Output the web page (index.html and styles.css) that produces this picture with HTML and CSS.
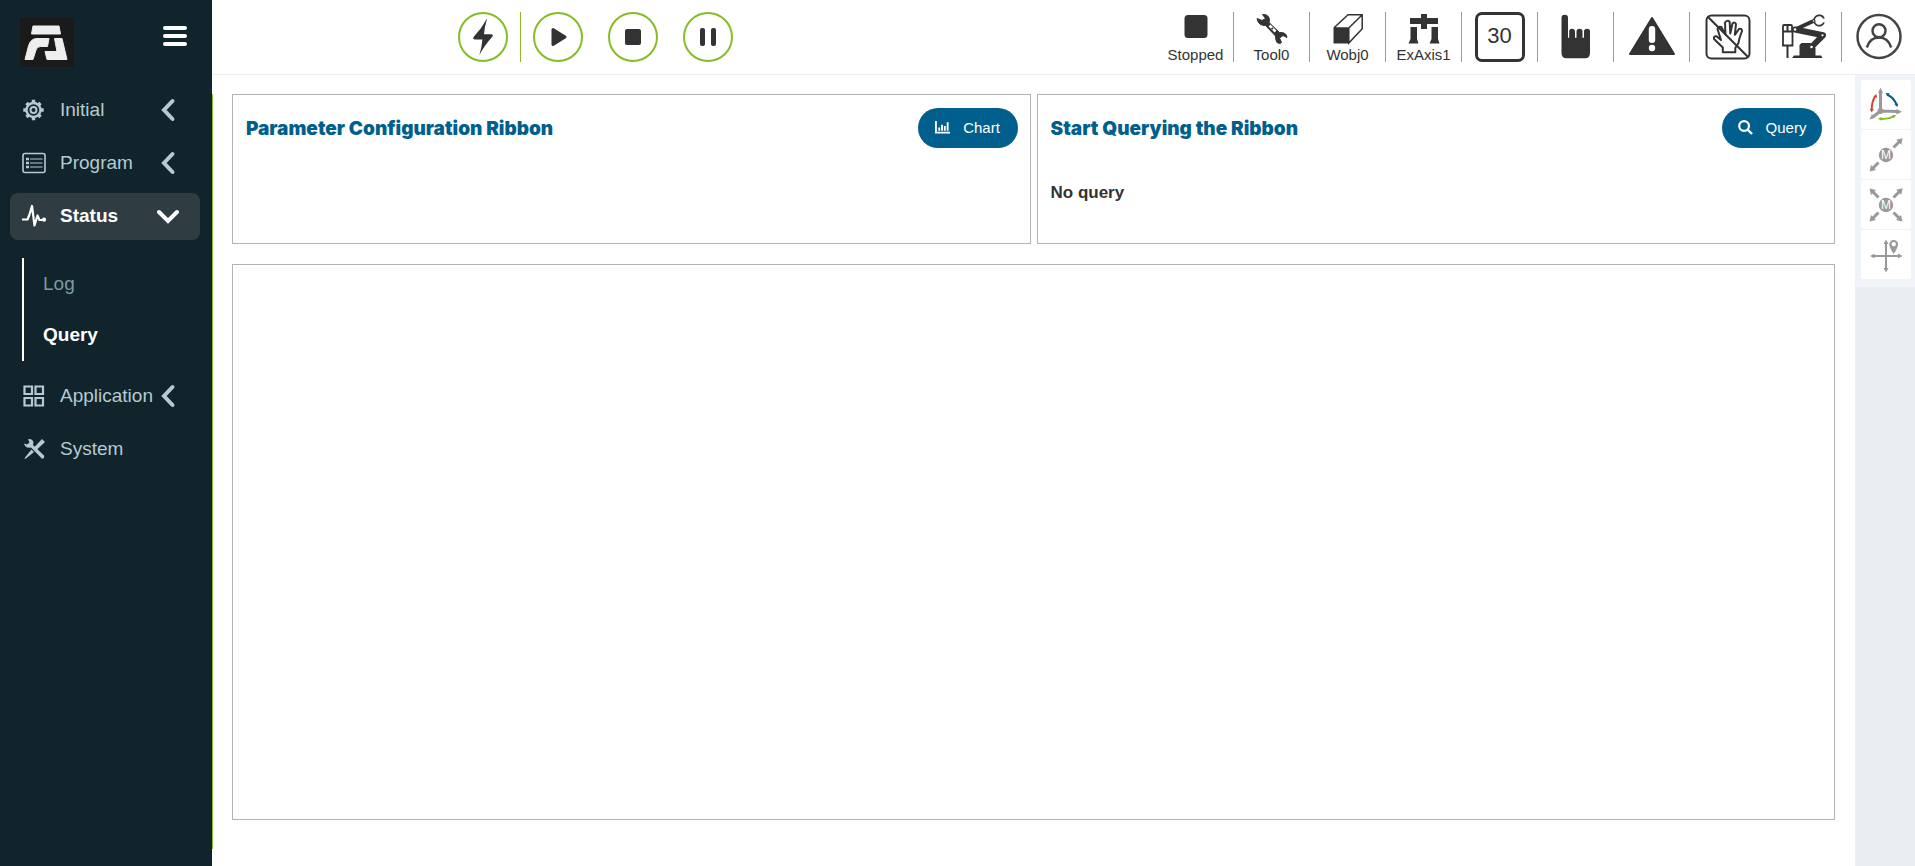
FILE: index.html
```html
<!DOCTYPE html>
<html lang="en">
<head>
<meta charset="utf-8">
<title>Status Query</title>
<link rel="stylesheet" href="styles.css">
</head>
<body>
<aside class="sidebar">
  <div class="brand">
    <svg class="logo" viewBox="0 0 54 49" role="img" aria-label="Logo">
      <rect width="54" height="49" fill="#1a1a1a"/>
      <g fill="#eee" stroke="#eee" stroke-width="1" stroke-linejoin="round">
        <path d="M13 8h26l1.500 8H11.500z"/>
        <path d="M5 41.500 8.500 28Q10.500 20.500 17 20.500H29l-1.500 8H20.500Q17 28.500 16 32l-3 9.500z"/>
        <path d="M34.500 20.500h7.500l5 21H27l-2-8h12z"/>
      </g>
    </svg>
    <button class="menu-toggle" aria-label="Toggle menu"><span></span><span></span><span></span></button>
  </div>
  <nav class="menu">
    <a class="item" href="#initial">
      <svg class="item-icon" viewBox="0 0 24 24" fill="none" stroke="currentColor">
        <circle cx="11.500" cy="12" r="7" stroke-width="2.400"/><circle cx="11.500" cy="12" r="3" stroke-width="2"/>
        <path d="M11.500 1.800v3M11.500 19.200v3M1.300 12h3M18.700 12h3M4.500 5l2 2M16.500 17l2 2M4.500 19l2-2M16.500 7l2-2" stroke-width="3.400"/>
      </svg>
      <span>Initial</span>
      <svg class="chevron" viewBox="0 0 24 24"><path d="M16.500 3 8 12l8.500 9"/></svg>
    </a>
    <a class="item" href="#program">
      <svg class="item-icon" viewBox="0 0 24 24" fill="none" stroke="currentColor">
        <rect x="1" y="2.500" width="22" height="19" rx="2" stroke-width="1.600"/>
        <path d="M8 8h12.500M8 12h12.500M8 16h12.500" stroke-width="1"/>
        <path d="M4 8h3M4 12h3M4 16h3" stroke-width="2.400"/>
      </svg>
      <span>Program</span>
      <svg class="chevron" viewBox="0 0 24 24"><path d="M16.500 3 8 12l8.500 9"/></svg>
    </a>
    <a class="item active" href="#status">
      <svg class="item-icon" viewBox="0 0 24 24" fill="none" stroke="currentColor" stroke-width="2.200" stroke-linejoin="round">
        <path d="M0 15.500h5.500l2-5L10 2l2.500 19.500 3-10 2 4.500H22"/><circle cx="22" cy="15.700" r="1" fill="currentColor"/>
      </svg>
      <span>Status</span>
      <svg class="chevron" viewBox="0 0 24 24"><path d="M3 8l9 9 9-9"/></svg>
    </a>
    <div class="submenu">
      <a href="#log">Log</a>
      <a class="current" href="#query">Query</a>
    </div>
    <a class="item" href="#application">
      <svg class="item-icon" viewBox="0 0 24 24" fill="none" stroke="currentColor" stroke-width="2.200">
        <path d="M2.500 2.500h7.500v7.500H2.500zM13.500 2.500h7.500v7.500H13.500zM2.500 14h7.500v7.500H2.500zM13.500 14h7.500v7.500H13.500z"/>
      </svg>
      <span>Application</span>
      <svg class="chevron" viewBox="0 0 24 24"><path d="M16.500 3 8 12l8.500 9"/></svg>
    </a>
    <a class="item" href="#system">
      <svg class="item-icon" viewBox="0 0 24 24" fill="currentColor">
        <path d="M2 6.500 5 7.500 7.500 5.500 6 2.200Q10 1.500 11.500 5L11 8 22 18.500Q23 21.500 20 21.800L9 10.500Q3 11.500 2 6.500z"/>
        <path d="M20 2l3 3-8.500 8L12 10.500zM9.500 12.500l2.500 2.500-8 6.500-1.500.5.500-1.500z"/>
      </svg>
      <span>System</span>
    </a>
  </nav>
</aside>
<div class="page">
  <header class="topbar">
    <div class="controls">
      <button class="round" aria-label="Enable"><svg viewBox="0 0 50 50"><path d="M29.200 6.300Q26.500 15 26 22.300H33Q35.500 22.500 34.500 24.500 26 34 21.300 43.200 24 34 24.300 27.500H17Q14.500 27 15.600 25 24 16 29.200 6.300z"/></svg></button>
      <span class="divider"></span>
      <div class="playback">
        <button class="round" aria-label="Start"><svg viewBox="0 0 50 50"><path d="M20 17.500 32 25 20 32.500z" stroke="#333" stroke-width="3" stroke-linejoin="round"/></svg></button>
        <button class="round" aria-label="Stop"><svg viewBox="0 0 50 50"><rect x="17" y="17" width="16" height="16" rx="2"/></svg></button>
        <button class="round" aria-label="Pause"><svg viewBox="0 0 50 50"><rect x="17" y="16" width="5" height="18" rx="2"/><rect x="28" y="16" width="5" height="18" rx="2"/></svg></button>
      </div>
    </div>
    <div class="status">
      <div class="cell">
        <svg class="small" viewBox="0 0 30 30"><rect x="3.500" y="1" width="23" height="23" rx="3.500"/></svg>
        <span>Stopped</span>
      </div>
      <button class="cell">
        <svg class="small" viewBox="0 0 30 30">
          <path d="M0 4.500 5 6.500 8.500 4.500 5.500.5Q12 0 12.500 6L12 8.500 22.500 18.500Q29.500 18 30 23.500L26 21.500 22.500 24 24.500 28.500Q23 30.500 20 28.500 18.500 26 18.500 22L8.500 11.500Q1.500 12 0 4.500z" stroke="#333" stroke-width="1" stroke-linejoin="round"/>
          <path d="M12.500 11.500 18.500 17.500" stroke="#fff" stroke-width="2.500"/><circle cx="15.300" cy="14.500" r="1"/>
        </svg>
        <span>Tool0</span>
      </button>
      <button class="cell">
        <svg class="small" viewBox="0 0 30 30">
          <path d="M.5 14H16v15.500H.5z"/><path d="M.8 14 15 .8h14.200v14L15.800 29V14L29 1M1 14h15" fill="none" stroke="#333" stroke-width="1.500"/>
        </svg>
        <span>Wobj0</span>
      </button>
      <button class="cell">
        <svg class="small" viewBox="0 0 30 30"><path d="M1 4h11V0h6v4h11v6H18v5h-6v-5H1zM1.500 13H8v12l1.500 4.500H-.5L1.500 25zM22.500 13H29v12l1.500 4.500H20.500L22.500 25z"/></svg>
        <span>ExAxis1</span>
      </button>
      <button class="cell"><span class="speed">30</span></button>
      <button class="cell" aria-label="Manual mode">
        <svg viewBox="0 0 50 50"><path d="M10.500 6Q10.500 2.700 13.800 2.700T17 6V25.700h1.200V19.500Q18.200 16.700 21 16.700T24 19.500v6.200h1.500V19.500Q25.500 16.700 28.500 16.700T31.500 19.500v6.200H33V19.500Q33 16.700 36 16.700T39 19.500V41Q39 46.300 34 46.300H15.500Q10.500 46.300 10.500 41z"/></svg>
      </button>
      <button class="cell" aria-label="Warnings">
        <svg viewBox="0 0 50 50"><path d="M25 6 47 42H3z" stroke="#333" stroke-width="2" stroke-linejoin="round"/><rect x="21.800" y="14" width="6.400" height="17" rx="3" fill="#fff"/><circle cx="25" cy="36" r="3.200" fill="#fff"/></svg>
      </button>
      <button class="cell" aria-label="Drag disabled">
        <svg viewBox="0 0 50 50" class="line">
          <rect x="3.500" y="3.500" width="43" height="43" rx="5"/>
          <path d="M19.800 40.300V35.500L11 27Q10.500 23.800 13.500 24.300L18 28 14.500 17Q15.500 14 18.300 15L22.500 22.500 22 10.500Q24.300 7.500 26.700 10L27.300 21.500 29.500 11.500Q32 9.500 33 12L31.800 22.800 36 17Q39 16 39 19 36 27 35.500 31L32.300 36v4.300z" stroke-linejoin="round"/>
          <path d="M4.800 4.800 45.300 45.300"/>
        </svg>
      </button>
      <button class="cell" aria-label="Robot">
        <svg viewBox="0 0 50 50">
          <path d="M13 46l2-2.500h27l1.500 2.500zM20.500 44V33l2-2h9l5 5v8z"/>
          <path d="M16 17.500 44 23.300 32.500 35" fill="none" stroke="#333" stroke-width="6" stroke-linejoin="round" stroke-linecap="round"/>
          <path d="M16 17.500 34.500 9" fill="none" stroke="#333" stroke-width="4" stroke-linecap="round"/>
          <path d="M45 6.500A5.200 5.200 0 1 0 45 10.500" fill="none" stroke="#333" stroke-width="1.800"/>
          <path d="M4 19.500V14q0-1 1-1h7q1 0 1 1v5.500zM4 19.500h9.500V33.500H4z" fill="#fff" stroke="#333" stroke-width="1.800"/>
          <path d="M8.500 13v6.500M8.500 33.500V46" stroke="#333" stroke-width="2"/>
          <circle cx="16" cy="17.500" r="1.300" fill="#fff"/><circle cx="43.500" cy="23.300" r="1.100" fill="#fff"/><circle cx="32.500" cy="35" r="1.300" fill="#fff"/><circle cx="34.500" cy="9" r=".8" fill="#fff"/>
        </svg>
      </button>
      <button class="cell" aria-label="Account">
        <svg viewBox="0 0 50 50" class="line account"><circle cx="25" cy="24.500" r="21.500"/><circle cx="25" cy="18.700" r="6.500"/><path d="M12.800 35.500Q16 25.500 25 25.500T37.200 35.500"/></svg>
      </button>
    </div>
  </header>
  <div class="body">
    <main class="content">
      <div class="cards">
        <section class="card">
          <div class="card-head">
            <h2>Parameter Configuration Ribbon</h2>
            <button class="pill">
              <svg viewBox="0 0 16 14"><path d="M0 0h2v11.500h14v2H0zM3.500 7h2v3.500h-2zM6.500 4h2v6.500h-2zM9.500 5.500h2v5h-2zM12.500 1.500h2v9h-2z"/></svg>
              Chart
            </button>
          </div>
        </section>
        <section class="card">
          <div class="card-head">
            <h2>Start Querying the Ribbon</h2>
            <button class="pill">
              <svg viewBox="0 0 16 16" fill="none" stroke="#fff" stroke-width="2.400"><circle cx="6.500" cy="6.500" r="5.200" fill="none"/><path d="M10.500 10.500 15 15"/></svg>
              Query
            </button>
          </div>
          <p class="result">No query</p>
        </section>
      </div>
      <section class="card plot"></section>
    </main>
    <aside class="rail">
      <div class="tools">
        <button aria-label="Coordinate rotation">
          <svg viewBox="0 0 50 49">
            <path class="arm" d="M19.500 31V12M19.500 31l17 .6M19.500 31l-7 5.500"/>
            <circle cx="19.500" cy="31" r="3"/><path d="M19.500 7.500l2.500 5.500h-5zM41 31.800l-5.500 2.800v-5.500zM8.500 39.500l2.500-5.500 3 4z"/>
            <path d="M14.300 16Q10.500 22 10.700 30" fill="none" stroke="#d9432f" stroke-width="2"/><path d="M15.500 14l.5 4-3.500-1.500zM10.700 32.500l-2-3.500h4z" fill="#d9432f"/>
            <path d="M26 14.500Q33 17.500 35.700 25" fill="none" stroke="#005f8d" stroke-width="2"/><path d="M24.500 13.300l4-.3-1.500 3.500zM36.500 27l-3-2.500 3.700-1z" fill="#005f8d"/>
            <path d="M19 39Q27 39.500 33 36.300" fill="none" stroke="#86bc25" stroke-width="2"/><path d="M17 38.800l3.500-2v4zM35 35l-2 3.300-1.800-3.300z" fill="#86bc25"/>
          </svg>
        </button>
        <button aria-label="Single axis motion">
          <svg viewBox="0 0 50 49"><circle cx="25" cy="25" r="7.200"/><text x="25" y="29">M</text>
            <path class="arm" d="M32.500 17.500l6-6M17.500 32.500l-6 6"/><path d="M41.700 8.300l-1.500 6.500-5-5zM8.500 41.500l1.500-6.500 5 5z"/></svg>
        </button>
        <button aria-label="Multi axis motion">
          <svg viewBox="0 0 50 49"><circle cx="25" cy="25" r="7.200"/><text x="25" y="29">M</text>
            <path class="arm" d="M32.500 17.500l6-6M17.500 32.500l-6 6M17.500 17.500l-6-6M32.500 32.500l6 6"/><path d="M41.700 8.300l-1.500 6.500-5-5zM8.500 41.500l1.500-6.500 5 5zM8.500 8.500l6.500 1.500-5 5zM41.500 41.500l-6.500-1.500 5-5z"/></svg>
        </button>
        <button aria-label="Point positioning">
          <svg viewBox="0 0 50 49"><path class="arm thin" d="M25 13v26M12 26h26"/>
            <path d="M25 9.500l2.500 4.500h-5zM25 42.500l2.500-4.500h-5zM9 26l4.500-2.500v5zM41.500 26l-4.500-2.500v5z"/>
            <path fill-rule="evenodd" d="M32.700 24Q28.300 17.500 28.300 14.300a4.400 4.400 0 0 1 8.800 0Q37.100 17.500 32.700 24zM32.700 12a2.200 2.200 0 1 0 .01 0z"/></svg>
        </button>
      </div>
    </aside>
  </div>
</div>
</body>
</html>
```
FILE: styles.css
```css
* { box-sizing: border-box; }

body {
  margin: 0;
  min-height: 100vh;
  display: flex;
  font-family: "Liberation Sans", Arial, sans-serif;
  color: #333;
  background: #fff;
}

button {
  font: inherit;
  color: inherit;
  background: none;
  border: 0;
  padding: 0;
  cursor: pointer;
}

a { color: inherit; text-decoration: none; }
svg { display: block; overflow: visible; }

/* Sidebar */
.sidebar {
  flex: 0 0 212px;
  background: #11242b;
  color: #b5cad1;
}

.brand {
  display: flex;
  justify-content: space-between;
  align-items: flex-start;
  padding: 18px 25px 0 20px;
}

.logo { width: 54px; height: 49px; }

.menu-toggle {
  display: flex;
  flex-direction: column;
  gap: 4px;
  margin-top: 8px;
}

.menu-toggle span {
  width: 24px;
  height: 4px;
  border-radius: 2px;
  background: #fff;
}

.menu {
  display: flex;
  flex-direction: column;
  gap: 6px;
  padding: 20px 12px 0 10px;
  font-size: 19px;
}

.item {
  display: flex;
  align-items: center;
  height: 47px;
  padding: 0 20px 2px 12px;
  border-radius: 8px;
}

.item-icon { width: 24px; height: 24px; margin-right: 14px; flex: none; }

.chevron {
  width: 24px;
  height: 24px;
  margin-left: auto;
  flex: none;
  fill: none;
  stroke: currentColor;
  stroke-width: 4;
  stroke-linecap: round;
}

.active { background: #2f3d43; color: #fff; font-weight: bold; }

.submenu {
  display: flex;
  flex-direction: column;
  margin: 12px 0 6px 12px;
  padding: 0 0 1px 19px;
  border-left: 2px solid #fff;
  line-height: 51px;
  color: #7d99a3;
}

.current { color: #fff; font-weight: bold; }

/* Top bar */
.page { flex: 1; min-width: 0; display: flex; flex-direction: column; }

.topbar {
  display: flex;
  justify-content: space-between;
  padding: 12px 0;
  border-bottom: 1px solid #eee;
}

.controls { display: flex; gap: 12px; padding-left: 246px; }
.playback { display: flex; gap: 25px; }
.divider { width: 1px; background: #86bc25; }

.round {
  width: 50px;
  height: 50px;
  border: 2px solid #86bc25;
  border-radius: 50%;
}

.round svg { width: 50px; height: 50px; margin: -2px; fill: #333; }

.status { display: flex; }

.cell {
  width: 76px;
  height: 50px;
  display: flex;
  flex-direction: column;
  align-items: center;
  border-right: 1px solid #86bc25;
  font-size: 15px;
  line-height: 21px;
}

.cell:last-child { border-right: 0; width: 73px; }
.cell svg { width: 50px; height: 50px; fill: #333; }
.cell .small { width: 30px; height: 30px; margin-top: 2px; flex: none; }

.cell .line { fill: none; stroke: #333; stroke-width: 2; }
.cell .account { stroke: #444; stroke-width: 2.5; }

.speed {
  width: 50px;
  height: 50px;
  border: 3px solid #333;
  border-radius: 7px;
  font-size: 22px;
  line-height: 42px;
}

/* Content */
.body { flex: 1; display: flex; }

.content {
  flex: 1;
  display: flex;
  flex-direction: column;
  gap: 20px;
  margin: 19px 0 17px;
  padding: 0 20px 29px 19px;
  border-left: 1px solid #86bc25;
}

.cards { display: grid; grid-template-columns: 1fr 1fr; gap: 6px; }

.card {
  min-height: 150px;
  padding: 13px 12px 12px 13px;
  border: 1px solid #b3b3b3;
}

.plot { flex: 1; }

.card-head {
  display: flex;
  justify-content: space-between;
  align-items: center;
  height: 40px;
}

h2 {
  margin: 0;
  font-family: Inter, "Liberation Sans", sans-serif;
  font-size: 19px;
  font-weight: 900;
  color: #005f8d;
}

.pill {
  display: flex;
  align-items: center;
  justify-content: center;
  gap: 13px;
  width: 100px;
  height: 40px;
  padding-bottom: 2px;
  border-radius: 20px;
  background: #005f8d;
  color: #fff;
  font-size: 15px;
}

.pill svg { width: 15px; height: 15px; fill: #fff; }

.result {
  margin: 35px 0 0;
  font-size: 17px;
  line-height: 20px;
  font-weight: bold;
}

/* Right tool rail */
.rail { flex: 0 0 60px; background: #eaeef3; }

.tools {
  display: flex;
  flex-direction: column;
  gap: 1px;
  padding: 5px 4px 8px 6px;
  background: #f0f4f8;
}

.tools button { height: 49px; border-radius: 3px; background: #fff; }
.tools svg { width: 50px; height: 49px; fill: #999; }
.tools .arm { fill: none; stroke: #999; stroke-width: 3; }
.tools .thin { stroke-width: 2; }

.tools text {
  fill: #fff;
  font-size: 12px;
  text-anchor: middle;
}
```
